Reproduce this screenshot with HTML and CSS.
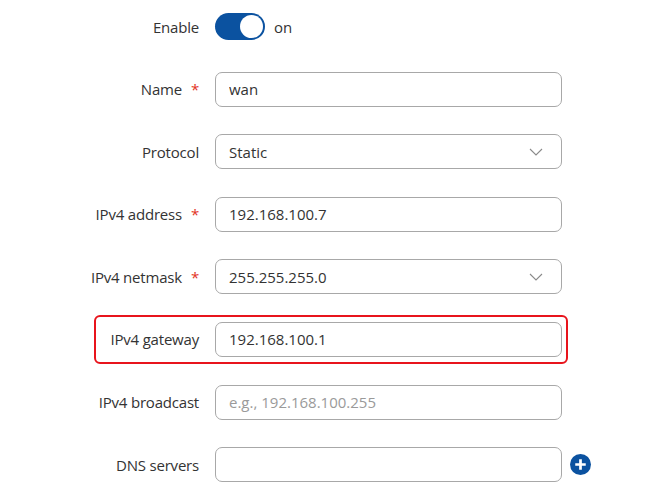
FILE: index.html
```html
<!DOCTYPE html>
<html lang="en">
<head>
    <meta charset="UTF-8">
    <meta name="viewport" content="width=device-width, initial-scale=1.0">
    <title>WAN interface</title>
    <link rel="stylesheet" href="styles.css">
</head>
<body>
    <div class="form">
        <div class="row">
            <label class="label">Enable</label>
            <div class="field switch-field">
                <span class="switch"><span class="knob"></span></span>
                <span class="switch-text">on</span>
            </div>
        </div>

        <div class="row">
            <label class="label" for="name">Name<span class="req">*</span></label>
            <div class="field">
                <input type="text" id="name" value="wan">
            </div>
        </div>

        <div class="row">
            <label class="label">Protocol</label>
            <div class="field">
                <div class="select">
                    <span>Static</span>
                    <svg class="chevron" width="14" height="8" viewBox="0 0 14 8"><path d="M1 1l6 6 6-6" fill="none" stroke="#8a8a8a" stroke-width="1.1"/></svg>
                </div>
            </div>
        </div>

        <div class="row">
            <label class="label" for="ipaddr">IPv4 address<span class="req">*</span></label>
            <div class="field">
                <input type="text" id="ipaddr" value="192.168.100.7">
            </div>
        </div>

        <div class="row">
            <label class="label">IPv4 netmask<span class="req">*</span></label>
            <div class="field">
                <div class="select">
                    <span>255.255.255.0</span>
                    <svg class="chevron" width="14" height="8" viewBox="0 0 14 8"><path d="M1 1l6 6 6-6" fill="none" stroke="#8a8a8a" stroke-width="1.1"/></svg>
                </div>
            </div>
        </div>

        <div class="row highlight">
            <label class="label" for="gateway">IPv4 gateway</label>
            <div class="field">
                <input type="text" id="gateway" value="192.168.100.1">
            </div>
        </div>

        <div class="row">
            <label class="label" for="broadcast">IPv4 broadcast</label>
            <div class="field">
                <input type="text" id="broadcast" placeholder="e.g., 192.168.100.255">
            </div>
        </div>

        <div class="row">
            <label class="label" for="dns">DNS servers</label>
            <div class="field">
                <input type="text" id="dns">
            </div>
            <svg class="add" width="21" height="21" viewBox="0 0 20 20">
                <circle cx="10" cy="10" r="10" fill="#0b52a0"/>
                <path d="M10 5v10M5 10h10" stroke="#fff" stroke-width="2.6"/>
            </svg>
        </div>
    </div>
</body>
</html>
```

FILE: styles.css
```css
body {
    font-family: "Open Sans", "Noto Sans", Arial, sans-serif;
    font-size: 15px;
    color: #333;
    background: #fff;
    margin: 0;
    padding: 0;
}
.form {
    width: 474px;
    margin-left: 94px;
    padding-top: 2px;
}
.row {
    display: flex;
    align-items: center;
    height: 35px;
    padding: 5px 4px;
    border: 2px solid transparent;
    border-radius: 6px;
    margin-bottom: 13.6px;
}
.row.highlight {
    border-color: #e8141c;
}
.label {
    display: flex;
    justify-content: flex-end;
    width: 99px;
    flex-shrink: 0;
    padding-right: 16px;
    white-space: nowrap;
    letter-spacing: -0.2px;
    color: #333;
}
.req {
    color: #e2321e;
    margin-left: 9px;
}
.field {
    flex: 1;
    display: flex;
    align-items: center;
}
input, .select {
    box-sizing: border-box;
    width: 100%;
    height: 35px;
    padding: 0 13px;
    border: 1px solid #a8a8a8;
    border-radius: 7px;
    font-family: inherit;
    font-size: 15px;
    color: #333;
    background: #fff;
    outline: none;
}
input::placeholder {
    color: #9a9a9a;
}
.select {
    display: flex;
    align-items: center;
    justify-content: space-between;
    padding-right: 18px;
}
.switch {
    position: relative;
    display: inline-block;
    width: 50px;
    height: 27px;
    border-radius: 14px;
    background: #0b52a0;
}
.knob {
    position: absolute;
    top: 2px;
    right: 2px;
    width: 23px;
    height: 23px;
    border-radius: 50%;
    background: #fff;
}
.switch-text {
    margin-left: 9px;
}
.add {
    flex-shrink: 0;
    margin-left: 8px;
    margin-right: -29px;
}
```
